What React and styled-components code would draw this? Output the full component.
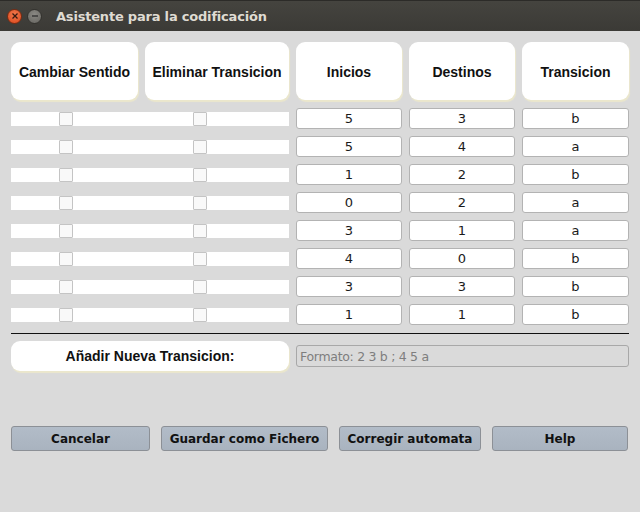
import React from "react";
import styled, { createGlobalStyle } from "styled-components";

const rows = [
  ["5", "3", "b"],
  ["5", "4", "a"],
  ["1", "2", "b"],
  ["0", "2", "a"],
  ["3", "1", "a"],
  ["4", "0", "b"],
  ["3", "3", "b"],
  ["1", "1", "b"],
];

const headers = ["Cambiar Sentido", "Eliminar Transicion", "Inicios", "Destinos", "Transicion"];

function App() {
  return (
    <Window>
      <GlobalStyle />
      <TitleBar>
        <WinButton close>
          <svg width="8" height="8" viewBox="0 0 8 8">
            <path d="M1.5 1.5 L6.5 6.5 M6.5 1.5 L1.5 6.5" stroke="#3a1a10" strokeWidth="1.3" />
          </svg>
        </WinButton>
        <WinButton>
          <svg width="8" height="8" viewBox="0 0 8 8">
            <path d="M1 4 L7 4" stroke="#2e2e2e" strokeWidth="1.3" />
          </svg>
        </WinButton>
        <Title>Asistente para la codificación</Title>
      </TitleBar>

      <Body>
        <Grid>
          {headers.map((h) => (
            <HeaderButton key={h}>{h}</HeaderButton>
          ))}
          {rows.map((r, i) => (
            <React.Fragment key={i}>
              <CheckStrip>
                <Check type="checkbox" offset={48} />
                <Check type="checkbox" offset={120} />
              </CheckStrip>
              {r.map((v, j) => (
                <Field key={j} readOnly value={v} />
              ))}
            </React.Fragment>
          ))}
        </Grid>

        <Separator />

        <AddRow>
          <AddButton>Añadir Nueva Transicion:</AddButton>
          <FormatInput placeholder="Formato: 2 3 b ; 4 5 a" />
        </AddRow>

        <Actions>
          <ActionButton>Cancelar</ActionButton>
          <ActionButton>Guardar como Fichero</ActionButton>
          <ActionButton>Corregir automata</ActionButton>
          <ActionButton>Help</ActionButton>
        </Actions>
      </Body>
    </Window>
  );
}

export default App;

const GlobalStyle = createGlobalStyle`
  html, body {
    margin: 0;
    padding: 0;
    background: #dadada;
  }
`;

const Window = styled.div`
  width: 640px;
  height: 512px;
  background: #dadada;
  overflow: hidden;
`;

const TitleBar = styled.div`
  height: 31px;
  background: linear-gradient(#45443f, #3b3a36);
  border-top: 1px solid #2c2b28;
  display: flex;
  align-items: center;
  padding-left: 7px;
  box-sizing: border-box;
`;

const WinButton = styled.div`
  width: 15px;
  height: 15px;
  border-radius: 50%;
  margin-right: 5px;
  display: flex;
  align-items: center;
  justify-content: center;
  background: ${(p) =>
    p.close
      ? "radial-gradient(circle at 50% 35%, #f37a4c, #d9461c)"
      : "radial-gradient(circle at 50% 35%, #8a8984, #65645f)"};
  border: 1px solid ${(p) => (p.close ? "#7a2a10" : "#33322e")};
  box-sizing: border-box;
`;

const Title = styled.div`
  margin-left: 9px;
  font-family: "DejaVu Sans", sans-serif;
  font-weight: bold;
  font-size: 13px;
  color: #dfdbd2;
  letter-spacing: -0.2px;
`;

const Body = styled.div`
  padding: 11px 11px 0 11px;
`;

const Grid = styled.div`
  display: grid;
  grid-template-columns: 127px 144px 106px 106px 107px;
  column-gap: 7px;
  row-gap: 7px;
  grid-auto-rows: 21px;
  grid-template-rows: 59px;
`;

const HeaderButton = styled.div`
  background: #fff;
  border-radius: 9px;
  box-shadow: 1px 2px 1px #ebe7cc;
  display: flex;
  align-items: center;
  justify-content: center;
  padding-top: 2px;
  box-sizing: border-box;
  font-family: "Liberation Sans", Arial, sans-serif;
  font-weight: bold;
  font-size: 14px;
  color: #111;
  margin-bottom: 1px;
`;

const CheckStrip = styled.div`
  grid-column: 1 / 3;
  align-self: center;
  height: 14px;
  background: #fff;
  display: flex;
`;

const Check = styled.input`
  appearance: none;
  margin: 0 0 0 ${(p) => p.offset}px;
  width: 14px;
  height: 14px;
  box-sizing: border-box;
  border: 1px solid #c4c4c4;
  border-radius: 1px;
  background: #f9f9f9;
`;

const Field = styled.input`
  box-sizing: border-box;
  width: 100%;
  height: 21px;
  margin: 0;
  border: 1px solid #b3b3b3;
  border-radius: 3px;
  background: #fff;
  text-align: center;
  font-family: "DejaVu Sans", sans-serif;
  font-size: 13px;
  color: #1a1a1a;
  padding: 0;
  outline: none;
`;

const Separator = styled.div`
  height: 1px;
  background: #111;
  margin: 8px 0 7px 0;
  width: 618px;
`;

const AddRow = styled.div`
  display: flex;
  align-items: center;
  gap: 7px;
`;

const AddButton = styled.div`
  width: 278px;
  height: 30px;
  background: #fff;
  border-radius: 9px;
  box-shadow: 1px 2px 1px #ebe7cc;
  display: flex;
  align-items: center;
  justify-content: center;
  font-family: "Liberation Sans", Arial, sans-serif;
  font-weight: bold;
  font-size: 14px;
  color: #111;
`;

const FormatInput = styled.input`
  box-sizing: border-box;
  width: 333px;
  height: 22px;
  border: 1px solid #a8a8a8;
  border-radius: 3px;
  background: #dadada;
  font-family: "DejaVu Sans", sans-serif;
  font-size: 12.5px;
  letter-spacing: -0.3px;
  padding: 0 3px;
  outline: none;
  &::placeholder {
    color: #7e7e7e;
  }
`;

const Actions = styled.div`
  display: grid;
  grid-template-columns: 139px 167px 142px 136px;
  column-gap: 11px;
  margin-top: 55px;
`;

const ActionButton = styled.div`
  height: 25px;
  box-sizing: border-box;
  background: linear-gradient(#b2bcc8, #a9b3bf);
  border: 1px solid #8c9096;
  border-radius: 3px;
  display: flex;
  align-items: center;
  justify-content: center;
  font-family: "DejaVu Sans", sans-serif;
  font-weight: bold;
  font-size: 12px;
  color: #111;
`;
